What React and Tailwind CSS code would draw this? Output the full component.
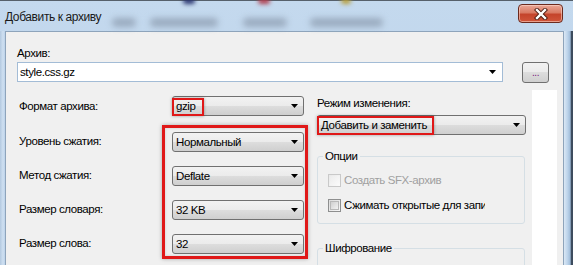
import React from "react";

const Arrow = () => (
  <svg width="7" height="4" viewBox="0 0 7 4" className="shrink-0">
    <path d="M0 0h7L3.5 4z" fill="#000" />
  </svg>
);

function Combo({ children, className = "", overlay }) {
  return (
    <div
      className={
        "relative flex h-[20px] items-center rounded-[3px] border border-[#707070] bg-[linear-gradient(#f2f2f2_0%,#ebebeb_50%,#dddddd_50%,#cfcfcf_100%)] pl-[3px] pr-[5px] " +
        className
      }
    >
      <span className="flex-1 whitespace-nowrap leading-[14px] text-black">{children}</span>
      <Arrow />
      {overlay}
    </div>
  );
}

function Checkbox({ disabled }) {
  return (
    <div
      className={
        "flex h-[13px] w-[13px] shrink-0 items-center justify-center border " +
        (disabled
          ? "border-[#c9c9c9] bg-[linear-gradient(135deg,#e8e8e8,#fbfbfb)]"
          : "border-[#8e8f8f] bg-[linear-gradient(135deg,#dcdcdc,#f7f7f7)]")
      }
    >
      <div
        className={
          "h-[9px] w-[9px] " +
          (disabled
            ? "bg-[linear-gradient(135deg,#ececec,#fafafa)]"
            : "border border-[#b8b8b8] bg-[linear-gradient(135deg,#cfcfcf,#f2f2f2)]")
        }
      />
    </div>
  );
}

export default function App() {
  return (
    <div className="relative h-[265px] w-[573px] overflow-hidden bg-[linear-gradient(#c4d9ee,#b9d0e8)] font-['Liberation_Sans',Arial,sans-serif] text-[11.5px] tracking-[-0.4px] text-black">
      <div className="h-[1px] bg-[#56606b]" />
      {/* title bar */}
      <div className="relative flex h-[30px] items-start">
        {/* blurred background showing through glass */}
        <div className="absolute left-[183px] top-[-3px] h-[6px] w-[12px] rounded-full bg-[#2a3570] blur-[2px]" />
        <div className="absolute left-[258px] top-[-3px] h-[6px] w-[12px] rounded-full bg-[#b04050] blur-[2px]" />
        <div className="absolute left-[341px] top-[-3px] h-[6px] w-[10px] rounded-full bg-[#b8a040] blur-[2px]" />
        <div className="absolute left-[112px] top-[17px] h-[9px] w-[24px] rounded-full bg-[#9aabbf] blur-[3px]" />
        <div className="absolute left-[150px] top-[17px] h-[9px] w-[68px] rounded-full bg-[#9aabbf] blur-[3px]" />
        <div className="absolute left-[243px] top-[17px] h-[9px] w-[44px] rounded-full bg-[#9aabbf] blur-[3px]" />
        <div className="absolute left-[310px] top-[17px] h-[9px] w-[73px] rounded-full bg-[#9aabbf] blur-[3px]" />
        <span className="relative ml-[5px] mt-[9px] text-[12px] leading-[14px] text-[#1a1a1a]">Добавить к архиву</span>
        <div className="relative ml-auto mr-[10px] mt-[3px] flex h-[19px] w-[45px] items-center justify-center rounded-[4px] border border-[#6b2a1e] bg-[linear-gradient(#eaa797_0%,#d97a63_45%,#c4442b_55%,#d0553a_100%)] shadow-[inset_0_0_0_1px_rgba(255,220,210,0.55)]">
          <svg width="16" height="12" viewBox="0 0 16 12">
            <path d="M4 2l8 8M12 2l-8 8" stroke="#4a1a10" strokeWidth="4.2" strokeLinecap="square" />
            <path d="M4 2l8 8M12 2l-8 8" stroke="#fff" strokeWidth="2.4" strokeLinecap="square" />
          </svg>
        </div>
      </div>

      {/* body */}
      <div className="flex h-[234px]">
        <div className="w-[5px] bg-[linear-gradient(90deg,#b3c9e0,#cfe0f1_60%,#bcd2ea)]" />
        <div className="w-[559px] border-l border-r border-t border-[#8ea4bb] bg-[#f0f0f0] pl-[11px] pt-[14px]">
          <div className="leading-[14px]">Архив:</div>
          <div className="mt-[2px] flex items-start">
            <div className="flex h-[20px] w-[486px] items-center border border-[#a3bcd6] bg-white pl-[2px] pr-[6px]">
              <span className="flex-1 leading-[14px]">style.css.gz</span>
              <Arrow />
            </div>
            <div className="ml-[19px] flex h-[21px] w-[27px] items-center justify-center rounded-[3px] border border-[#707070] bg-[linear-gradient(#f2f2f2_0%,#ebebeb_50%,#dddddd_50%,#cfcfcf_100%)] text-[10px] leading-[10px] text-[#7a1a7a]">
              ...
            </div>
          </div>

          <div className="mt-[13px] flex items-start">
            {/* left column */}
            <div className="w-[291px]">
              <div className="flex h-[20px] items-center">
                <span className="w-[155px] pl-[2px] leading-[14px]">Формат архива:</span>
                <Combo
                  className="w-[132px]"
                  overlay={
                    <div className="absolute left-[-1px] top-[1px] h-[18px] w-[32px] border-2 border-[#e01818] shadow-[0_0_3px_rgba(0,0,0,0.35)]" />
                  }
                >
                  gzip
                </Combo>
              </div>
              <div className="mt-[9px] flex items-start">
                <div className="flex w-[145px] flex-col gap-[14px] pl-[2px] pt-[7px]">
                  <div className="flex h-[20px] items-center">Уровень сжатия:</div>
                  <div className="flex h-[20px] items-center">Метод сжатия:</div>
                  <div className="flex h-[20px] items-center">Размер словаря:</div>
                  <div className="flex h-[20px] items-center">Размер слова:</div>
                </div>
                <div className="flex w-[146px] flex-col gap-[14px] border-[3px] border-[#e01818] pb-[2px] pl-[7px] pr-[1px] pt-[4px] shadow-[0_0_4px_rgba(0,0,0,0.3),inset_0_0_3px_rgba(0,0,0,0.15)]">
                  <Combo className="w-[132px]">Нормальный</Combo>
                  <Combo className="w-[132px]">Deflate</Combo>
                  <Combo className="w-[132px]">32 KB</Combo>
                  <Combo className="w-[132px]">32</Combo>
                </div>
              </div>
            </div>

            {/* right column */}
            <div className="ml-[9px] w-[209px]">
              <div className="leading-[14px]">Режим изменения:</div>
              <Combo
                className="mt-[5px] w-[209px]"
                overlay={
                  <div className="absolute left-[-1px] top-[0px] h-[19px] w-[117px] border-2 border-[#e01818] shadow-[0_0_3px_rgba(0,0,0,0.35)]" />
                }
              >
                Добавить и заменить
              </Combo>

              <fieldset className="mt-[14px] h-[75px] w-[208px] rounded-[3px] border border-[#d5dfe5] px-[10px]">
                <legend className="ml-[-5px] px-[2px] leading-[14px]">Опции</legend>
                <div className="mt-[10px] flex h-[14px] items-center gap-[3px]">
                  <Checkbox disabled />
                  <span className="leading-[14px] text-[#a0a0a0]">Создать SFX-архив</span>
                </div>
                <div className="mt-[11px] flex h-[14px] items-center gap-[3px]">
                  <Checkbox />
                  <span className="w-[141px] overflow-hidden whitespace-nowrap leading-[14px]">
                    Сжимать открытые для записи
                  </span>
                </div>
              </fieldset>

              <fieldset className="mt-[17px] h-[60px] w-[208px] rounded-[3px] border border-[#d5dfe5] px-[10px]">
                <legend className="ml-[-5px] px-[2px] leading-[14px]">Шифрование</legend>
                <div className="mt-[12px] flex h-[14px] items-center gap-[3px]">
                  <Checkbox />
                </div>
              </fieldset>
            </div>

            {/* white strip */}
            <div className="-mt-[6px] ml-[6px] h-[200px] w-[25px] bg-white" />
          </div>
        </div>
        <div className="flex-1 bg-[linear-gradient(90deg,#dbe8f5,#bcd3ea_40%,#9fbbd8_70%,#3d4c5e_78%,#3d4c5e)]" />
      </div>
    </div>
  );
}
